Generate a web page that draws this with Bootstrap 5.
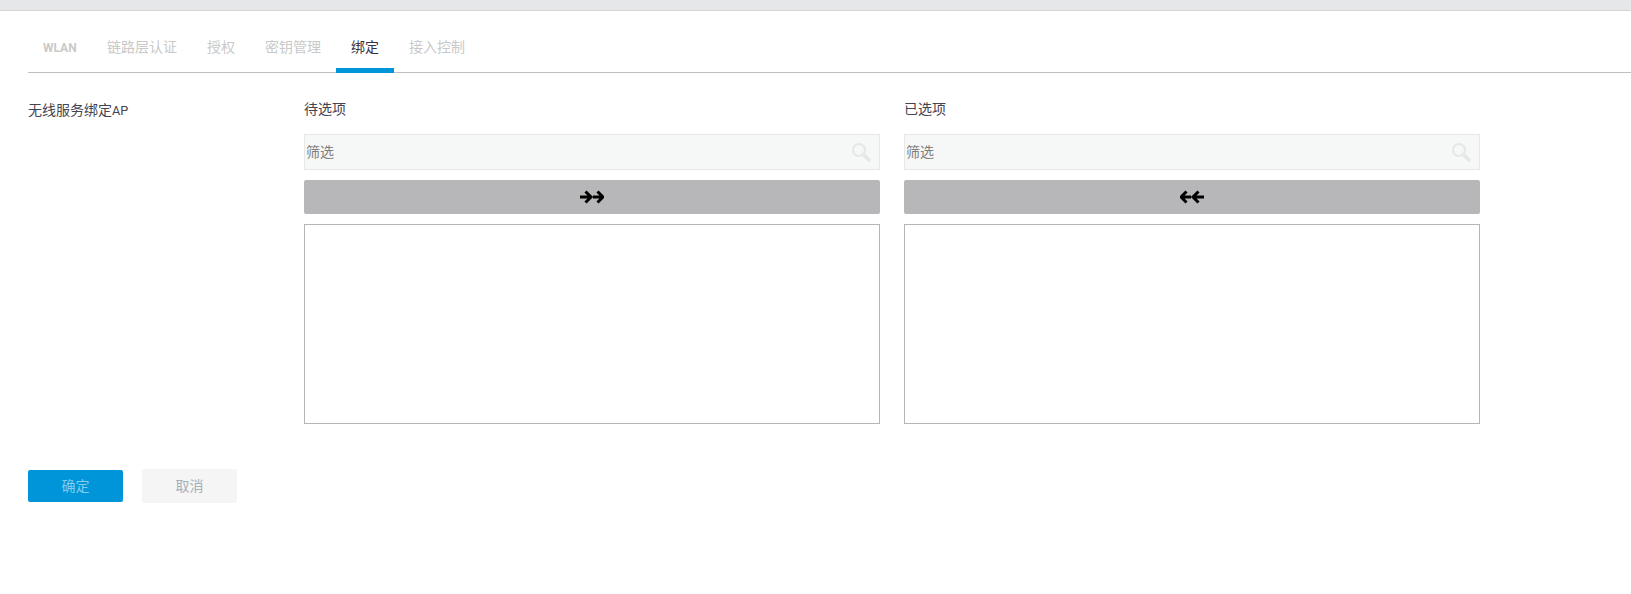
<!DOCTYPE html>
<html lang="zh-CN">
<head>
    <meta charset="UTF-8">
    <meta name="viewport" content="width=device-width, initial-scale=1.0">
    <title>绑定</title>
    <link href="https://cdn.jsdelivr.net/npm/bootstrap@5.3.0/dist/css/bootstrap.min.css" rel="stylesheet">
    <style>
        body {
            font-family: Roboto, "Noto Sans CJK SC", sans-serif;
            font-size: 14px;
            color: #444450;
            background-color: #fff;
        }
        .top-strip {
            height: 11px;
            background-color: #e6e7e9;
            border-bottom: 1px solid #d5d5d5;
        }
        .page-body {
            padding: 0 0 0 28px;
        }
        .tab-bar {
            height: 62px;
            border-bottom: 1px solid #c0c0c0;
        }
        .tab-item {
            display: block;
            padding: 26px 15px 0;
            height: 62px;
            color: #c9c9c9;
            line-height: 20px;
            text-decoration: none;
        }
        .tab-item.current {
            color: #333344;
            border-bottom: 5px solid #0095d9;
        }
        .latin-tight {
            font-size: 12.6px;
        }
        .tab-item .latin-tight {
            display: inline-block;
            width: 34px;
            font-size: 12px;
            font-weight: 700;
        }
        .form-side {
            width: 276px;
            padding-top: 27px;
            line-height: 20px;
        }
        .pick-area {
            padding-top: 26px;
            gap: 24px;
        }
        .pick-col {
            width: 576px;
        }
        .pick-title {
            height: 35px;
            line-height: 20px;
            color: #444450;
        }
        .filter-box {
            height: 36px;
            margin-bottom: 10px;
            padding: 0 8px 0 1px;
            background-color: #f6f8f7;
            border: 1px solid #e6e8e8;
            color: #808080;
        }
        .move-btn {
            height: 34px;
            margin-bottom: 10px;
            background-color: #b7b7b9;
            border-radius: 2px;
        }
        .pick-list {
            height: 200px;
            border: 1px solid #b5b5b5;
        }
        .form-btns {
            margin-top: 45px;
            gap: 19px;
        }
        .btn-ok, .btn-no {
            width: 95px;
            border-radius: 2px;
            display: flex;
            align-items: center;
            justify-content: center;
        }
        .btn-ok {
            height: 32px;
            margin-top: 1px;
            background-color: #0095d9;
            color: #7fcdf0;
        }
        .btn-no {
            height: 34px;
            background-color: #f5f5f5;
            color: #a3b0ba;
        }
    </style>
</head>
<body>
    <div class="top-strip"></div>
    <div class="page-body">
        <div class="tab-bar d-flex">
            <a class="tab-item" href="#"><span class="latin-tight">WLAN</span></a>
            <a class="tab-item" href="#">链路层认证</a>
            <a class="tab-item" href="#">授权</a>
            <a class="tab-item" href="#">密钥管理</a>
            <a class="tab-item current" href="#">绑定</a>
            <a class="tab-item" href="#">接入控制</a>
        </div>
        <div class="d-flex">
            <div class="form-side">无线服务绑定<span class="latin-tight">AP</span></div>
            <div class="pick-area d-flex">
                <div class="pick-col">
                    <div class="pick-title">待选项</div>
                    <div class="filter-box d-flex align-items-center justify-content-between">
                        <span>筛选</span>
                        <svg width="20" height="20" viewBox="0 0 20 20" fill="none" stroke="#e6e8e8"><circle cx="8" cy="8" r="6" stroke-width="2.2"/><path d="M12.5 12.5 18 18" stroke-width="3.4" stroke-linecap="round"/></svg>
                    </div>
                    <div class="move-btn d-flex align-items-center justify-content-center">
                        <svg width="24" height="14" viewBox="0 0 24 14" fill="none" stroke="#000" stroke-width="3"><path d="M0 7H11M5.5 1.5 11 7 5.5 12.5"/><path d="M13 7H23M17.5 1.5 23 7 17.5 12.5"/></svg>
                    </div>
                    <div class="pick-list"></div>
                </div>
                <div class="pick-col">
                    <div class="pick-title">已选项</div>
                    <div class="filter-box d-flex align-items-center justify-content-between">
                        <span>筛选</span>
                        <svg width="20" height="20" viewBox="0 0 20 20" fill="none" stroke="#e6e8e8"><circle cx="8" cy="8" r="6" stroke-width="2.2"/><path d="M12.5 12.5 18 18" stroke-width="3.4" stroke-linecap="round"/></svg>
                    </div>
                    <div class="move-btn d-flex align-items-center justify-content-center">
                        <svg width="24" height="14" viewBox="0 0 24 14" fill="none" stroke="#000" stroke-width="3"><path d="M24 7H13M18.5 1.5 13 7 18.5 12.5"/><path d="M11 7H1M6.5 1.5 1 7 6.5 12.5"/></svg>
                    </div>
                    <div class="pick-list"></div>
                </div>
            </div>
        </div>
        <div class="form-btns d-flex align-items-start">
            <div class="btn-ok">确定</div>
            <div class="btn-no">取消</div>
        </div>
    </div>
    <script src="https://cdn.jsdelivr.net/npm/bootstrap@5.3.0/dist/js/bootstrap.bundle.min.js"></script>
</body>
</html>
